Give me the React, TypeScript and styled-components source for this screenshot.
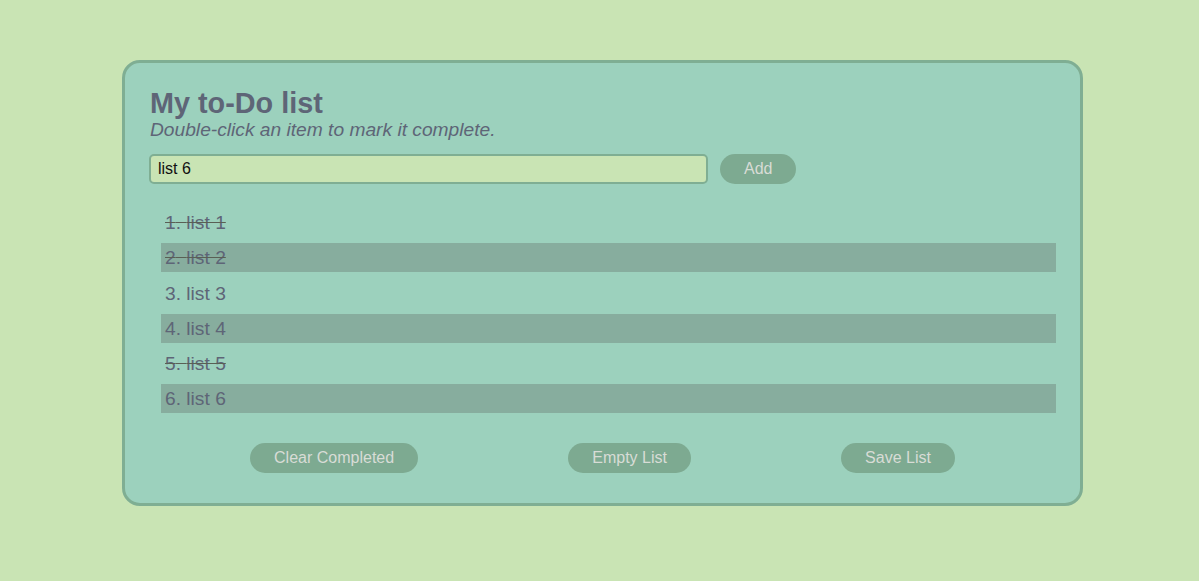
import React, { useState } from "react";
import styled, { createGlobalStyle } from "styled-components";

const Global = createGlobalStyle`
  html, body { margin: 0; padding: 0; background: #c9e4b4; }
  body { font-family: "Liberation Sans", Arial, sans-serif; }
`;

const Page = styled.div`
  width: 1199px;
  height: 581px;
  padding: 60px 0 0 122px;
  box-sizing: border-box;
  display: flex;
`;

const Card = styled.div`
  width: 961px;
  height: 446px;
  box-sizing: border-box;
  border: 3px solid #7fae93;
  border-radius: 18px;
  background: #9cd1bd;
  padding: 24px 24px 0 25px;
  display: flex;
  flex-direction: column;
`;

const Title = styled.h1`
  margin: 0;
  font-size: 28.8px;
  line-height: 32px;
  font-weight: bold;
  color: #5e6577;
`;

const Subtitle = styled.p`
  margin: 0;
  font-size: 19.2px;
  line-height: 22px;
  font-style: italic;
  color: #5e6577;
`;

const InputRow = styled.div`
  display: flex;
  align-items: center;
  gap: 12px;
  margin-top: 13px;
`;

const TextInput = styled.input`
  width: 559px;
  height: 30px;
  box-sizing: border-box;
  margin-left: -1px;
  border: 2px solid #7fae93;
  border-radius: 5px;
  background: #c9e4b4;
  font-family: "Liberation Sans", Arial, sans-serif;
  font-size: 16px;
  color: #111;
  padding: 0 7px;
  outline: none;
`;

const Pill = styled.button<{ $px: number }>`
  height: 30px;
  border: none;
  border-radius: 15px;
  background: #7daa91;
  color: #d8dcd6;
  font-family: "Liberation Sans", Arial, sans-serif;
  font-size: 16px;
  padding: 0 ${(p) => p.$px}px;
  cursor: pointer;
`;

const List = styled.ol`
  list-style: none;
  margin: 24px 0 0 11px;
  padding: 0;
  display: flex;
  flex-direction: column;
  gap: 6.25px;
`;

const Item = styled.li<{ $alt: boolean; $done: boolean }>`
  height: 29px;
  line-height: 29px;
  padding-left: 4px;
  font-size: 19.2px;
  color: #5e6577;
  background: ${(p) => (p.$alt ? "#87ad9e" : "transparent")};
  text-decoration: ${(p) => (p.$done ? "line-through" : "none")};
  text-decoration-color: #5a5f55;
  user-select: none;
`;

const Footer = styled.div`
  display: flex;
  justify-content: space-around;
  padding: 0 26px 0 25px;
  margin-top: 30px;
`;

const items = [
  { text: "list 1", done: true },
  { text: "list 2", done: true },
  { text: "list 3", done: false },
  { text: "list 4", done: false },
  { text: "list 5", done: true },
  { text: "list 6", done: false },
];

export default function App() {
  const [value, setValue] = useState("list 6");
  return (
    <>
      <Global />
      <Page>
        <Card>
          <Title>My to-Do list</Title>
          <Subtitle>Double-click an item to mark it complete.</Subtitle>
          <InputRow>
            <TextInput value={value} onChange={(e) => setValue(e.target.value)} />
            <Pill $px={24}>Add</Pill>
          </InputRow>
          <List>
            {items.map((it, i) => (
              <Item key={i} $alt={i % 2 === 1} $done={it.done}>
                {i + 1}. {it.text}
              </Item>
            ))}
          </List>
          <Footer>
            <Pill $px={24}>Clear Completed</Pill>
            <Pill $px={24}>Empty List</Pill>
            <Pill $px={24}>Save List</Pill>
          </Footer>
        </Card>
      </Page>
    </>
  );
}
